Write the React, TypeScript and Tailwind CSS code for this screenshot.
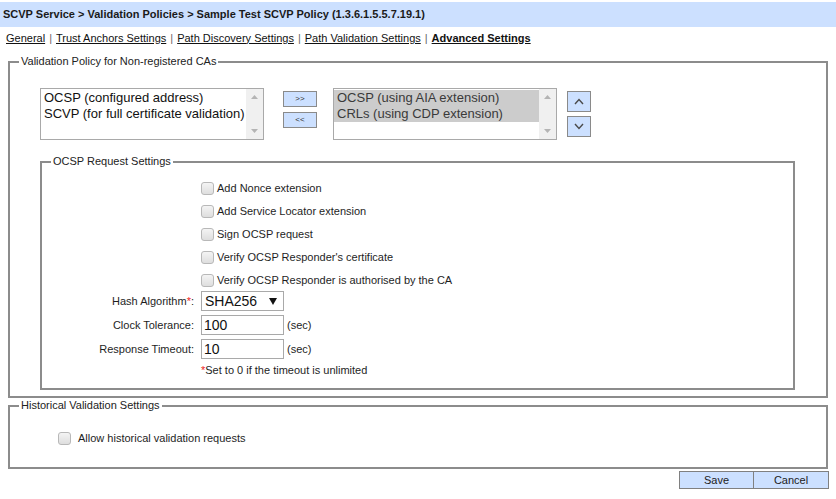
import { useState } from "react";

const ui = "font-['Liberation_Sans',Arial,sans-serif]";
const arial = "font-['Liberation_Sans',Arial,sans-serif]";

const Checkbox = ({ checked, onChange }: { checked: boolean; onChange: () => void }) => (
  <button
    type="button"
    onClick={onChange}
    className="flex h-[13px] w-[13px] shrink-0 items-center justify-center rounded-[3px] border border-[#b8b8b8] bg-gradient-to-b from-[#f4f4f4] to-[#dedede]"
  >
    {checked && (
      <svg width="9" height="9" viewBox="0 0 9 9">
        <path d="M1 4.5 L3.5 7 L8 1.5" stroke="#333" strokeWidth="1.5" fill="none" />
      </svg>
    )}
  </button>
);

const ScrollBar = () => (
  <div className="flex w-[17px] flex-col justify-between bg-[#f0f0f0] py-[5px]">
    <svg width="17" height="6" viewBox="0 0 17 6">
      <path d="M5 5 L8.5 1 L12 5 Z" fill="#b4b4b4" />
    </svg>
    <svg width="17" height="6" viewBox="0 0 17 6">
      <path d="M5 1 L8.5 5 L12 1 Z" fill="#b4b4b4" />
    </svg>
  </div>
);

const ListBox = ({ items, selected }: { items: string[]; selected?: boolean }) => (
  <div className="flex h-[52px] w-[224px] border border-[#a9a9a9] bg-white">
    <div className={`flex-1 overflow-hidden pt-[1px] ${arial} text-[13px] leading-[16px]`}>
      {items.map((it) => (
        <div
          key={it}
          className={`whitespace-nowrap pl-[3px] ${selected ? "bg-[#cccccc] text-[#3a3a3a]" : "text-[#111]"}`}
        >
          {it}
        </div>
      ))}
    </div>
    <ScrollBar />
  </div>
);

const SmallBtn = ({ label }: { label: string }) => (
  <button
    type="button"
    className={`h-[16px] w-[34px] border border-[#8a8a8a] bg-[#cce0ff] ${arial} text-[8px] leading-[14px] text-[#333]`}
  >
    {label}
  </button>
);

const ArrowBtn = ({ up }: { up?: boolean }) => (
  <button
    type="button"
    className="flex h-[21px] w-[24px] items-center justify-center border border-[#8a8a8a] bg-[#cce0ff]"
  >
    <svg width="10" height="7" viewBox="0 0 10 7">
      <path
        d={up ? "M1 6 L5 1.5 L9 6" : "M1 1 L5 5.5 L9 1"}
        stroke="#4a4a4a"
        strokeWidth="1.4"
        fill="none"
      />
    </svg>
  </button>
);

const options = [
  "Add Nonce extension",
  "Add Service Locator extension",
  "Sign OCSP request",
  "Verify OCSP Responder's certificate",
  "Verify OCSP Responder is authorised by the CA",
];

export default function App() {
  const [checks, setChecks] = useState<boolean[]>(options.map(() => false));
  const [historical, setHistorical] = useState(false);
  const [tolerance, setTolerance] = useState("100");
  const [timeout, setTimeoutVal] = useState("10");

  const tabs = ["General", "Trust Anchors Settings", "Path Discovery Settings", "Path Validation Settings"];

  return (
    <div className={`h-[499px] w-[836px] overflow-hidden bg-white ${ui} text-[11px] text-[#1e1e1e]`}>
      {/* Breadcrumb header */}
      <div className="mt-[2px] flex h-[25px] items-center bg-[#cce0ff] pl-[3px] text-[11px] font-bold text-[#1a1a1a]">
        SCVP Service &gt; Validation Policies &gt; Sample Test SCVP Policy (1.3.6.1.5.5.7.19.1)
      </div>

      {/* Tabs */}
      <div className="flex h-[20px] items-center pl-[6px] pt-[2px] text-[#111]">
        {tabs.map((t) => (
          <span key={t} className="flex items-center">
            <a className="cursor-pointer underline">{t}</a>
            <span className="mx-[4px] text-[#666]">|</span>
          </span>
        ))}
        <a className="cursor-pointer font-bold underline">Advanced Settings</a>
      </div>

      {/* Validation policy fieldset */}
      <fieldset className="mx-[8px] mt-[8px] h-[343px] border-2 border-[#8c8c8c]">
        <legend className="ml-[9px] px-[2px] leading-[13px] text-[#222]">Validation Policy for Non-registered CAs</legend>

        <div className="pl-[30px] pr-[31px]">
          <div className="mt-[20px] flex items-start">
            <ListBox items={["OCSP (configured address)", "SCVP (for full certificate validation)"]} />
            <div className="ml-[19px] mt-[3px] flex flex-col gap-[5px]">
              <SmallBtn label=">>" />
              <SmallBtn label="<<" />
            </div>
            <div className="ml-[16px]">
              <ListBox items={["OCSP (using AIA extension)", "CRLs (using CDP extension)"]} selected />
            </div>
            <div className="ml-[10px] mt-[3px] flex flex-col gap-[4px]">
              <ArrowBtn up />
              <ArrowBtn />
            </div>
          </div>

          <fieldset className="mt-[15px] h-[235px] border-2 border-[#8c8c8c]">
            <legend className="ml-[9px] px-[2px] leading-[13px] text-[#222]">OCSP Request Settings</legend>

            <div className="mt-[14px] flex flex-col gap-[10px] pl-[159px]">
              {options.map((o, i) => (
                <label key={o} className="flex h-[13px] cursor-pointer items-center gap-[3px]">
                  <Checkbox
                    checked={checks[i]}
                    onChange={() => setChecks(checks.map((c, j) => (j === i ? !c : c)))}
                  />
                  <span className="leading-[13px]">{o}</span>
                </label>
              ))}
            </div>

            <div className="mt-[4px] grid grid-cols-[152px_auto] items-center gap-x-[7px] gap-y-[4px]">
              <span className="text-right">
                Hash Algorithm<span className="text-[#ee2222]">*</span>:
              </span>
              <div
                className={`flex h-[20px] w-[83px] items-center justify-between border border-[#a9a9a9] bg-white pl-[3px] pr-[6px] ${arial} text-[14px] text-[#111]`}
              >
                SHA256
                <svg width="8" height="7" viewBox="0 0 8 7">
                  <path d="M0 0 L8 0 L4 7 Z" fill="#111" />
                </svg>
              </div>

              <span className="text-right">Clock Tolerance:</span>
              <div className="flex items-center gap-[3px]">
                <input
                  value={tolerance}
                  onChange={(e) => setTolerance(e.target.value)}
                  className={`h-[20px] w-[83px] border border-[#a9a9a9] px-[2px] ${arial} text-[14px] text-[#111] outline-none`}
                />
                <span>(sec)</span>
              </div>

              <span className="text-right">Response Timeout:</span>
              <div className="flex items-center gap-[3px]">
                <input
                  value={timeout}
                  onChange={(e) => setTimeoutVal(e.target.value)}
                  className={`h-[20px] w-[83px] border border-[#a9a9a9] px-[2px] ${arial} text-[14px] text-[#111] outline-none`}
                />
                <span>(sec)</span>
              </div>

              <span />
              <span className="-mt-[1px]">
                <span className="text-[#ee2222]">*</span>Set to 0 if the timeout is unlimited
              </span>
            </div>
          </fieldset>
        </div>
      </fieldset>

      {/* Historical validation fieldset */}
      <fieldset className="mx-[8px] mt-[1px] h-[70px] border-2 border-[#8c8c8c]">
        <legend className="ml-[9px] px-[2px] leading-[13px] text-[#222]">Historical Validation Settings</legend>
        <label className="ml-[48px] mt-[18px] flex cursor-pointer items-center gap-[7px]">
          <Checkbox checked={historical} onChange={() => setHistorical(!historical)} />
          <span>Allow historical validation requests</span>
        </label>
      </fieldset>

      {/* Actions */}
      <div className="mt-[2px] flex justify-end pr-[7px]">
        <button
          type="button"
          className={`h-[18px] w-[75px] border border-[#808080] bg-[#cce0ff] ${arial} text-[11px] text-[#222]`}
        >
          Save
        </button>
        <button
          type="button"
          className={`h-[18px] w-[75px] border border-l-0 border-[#808080] bg-[#cce0ff] ${arial} text-[11px] text-[#222]`}
        >
          Cancel
        </button>
      </div>
    </div>
  );
}
